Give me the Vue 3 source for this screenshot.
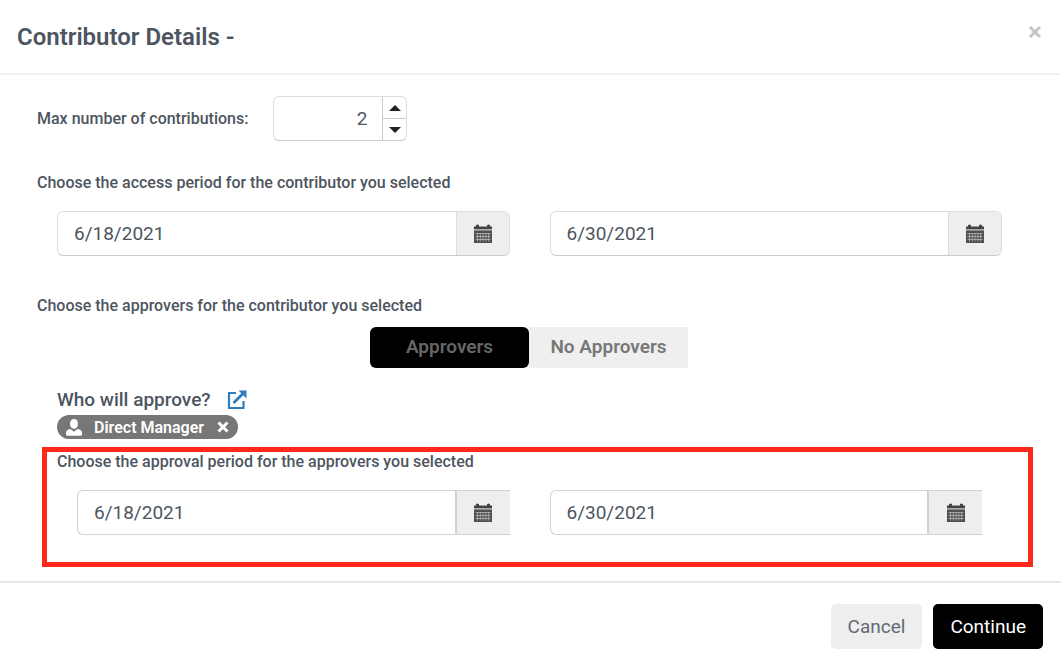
<script setup>
import { ref, h } from 'vue'

const contributions = ref(2)
const accessStart = ref('6/18/2021')
const accessEnd = ref('6/30/2021')
const approvalStart = ref('6/18/2021')
const approvalEnd = ref('6/30/2021')
const mode = ref('approvers')

const CalendarIcon = () =>
  h('svg', { width: 18, height: 20, viewBox: '0 0 18 20', 'aria-hidden': 'true' }, [
    h('path', { fill: '#444', d: 'M0 2.500h2V1.200Q3.500 0 5 1.200V2.500h8V1.200Q14.500 0 16 1.200V2.500h2V5H0z' }),
    h('path', { fill: '#aaa', d: 'M0 5h18v1.500H0z' }),
    h('path', { fill: '#505050', d: 'M0 6.500h18v12.500H0z' }),
    h('path', { stroke: '#b4b4b4', 'stroke-width': 0.8, d: 'M1.500 9.500h15M1.500 12.500h15M1.500 15.500h15M3.500 9v8.500M6.300 9v8.500M9.100 9v8.500M11.900 9v8.500M14.700 9v8.500' })
  ])
</script>

<template>
  <main class="dialog" role="dialog" aria-labelledby="title">
    <header class="head">
      <h1 id="title">Contributor Details -</h1>
      <button class="close" type="button" aria-label="Close">
        <svg width="14" height="14" viewBox="0 0 14 14"><path d="M2 2l10 10M12 2L2 12" stroke="#c6c6c6" stroke-width="3" /></svg>
      </button>
    </header>

    <form class="body" @submit.prevent>
      <div class="count-row">
        <label for="count">Max number of contributions:</label>
        <div class="spinner">
          <input id="count" v-model="contributions" type="text" inputmode="numeric" />
          <div class="steps">
            <button type="button" aria-label="Increase" @click="contributions++">
              <svg width="12" height="6" viewBox="0 0 12 6"><path d="M0 6L6 0l6 6z" fill="#222" /></svg>
            </button>
            <button type="button" aria-label="Decrease" @click="contributions--">
              <svg width="12" height="6" viewBox="0 0 12 6"><path d="M0 0l6 6 6-6z" fill="#222" /></svg>
            </button>
          </div>
        </div>
      </div>

      <p class="caption access-caption">Choose the access period for the contributor you selected</p>
      <div class="dates access">
        <div class="date">
          <input v-model="accessStart" type="text" aria-label="Access start date" />
          <button type="button" aria-label="Pick access start date"><CalendarIcon /></button>
        </div>
        <div class="date">
          <input v-model="accessEnd" type="text" aria-label="Access end date" />
          <button type="button" aria-label="Pick access end date"><CalendarIcon /></button>
        </div>
      </div>

      <p class="caption approver-caption">Choose the approvers for the contributor you selected</p>
      <div class="toggle">
        <button type="button" :class="{ active: mode === 'approvers' }" @click="mode = 'approvers'">Approvers</button>
        <button type="button" :class="{ active: mode === 'none' }" @click="mode = 'none'">No Approvers</button>
      </div>

      <div class="who">
        <h2>Who will approve?</h2>
        <a href="#" aria-label="Select approvers">
          <svg width="20" height="20" viewBox="0 0 20 20" fill="none" stroke="#2f7dbd">
            <path d="M9 3H2v15h14.500V11" stroke-width="2.200" />
            <path d="M6.500 13L16 3.500" stroke-width="2.800" />
            <path d="M11.500 .5H19.500V8.500z" fill="#2f7dbd" stroke="none" />
          </svg>
        </a>
      </div>
      <div class="chip">
        <svg width="16" height="17" viewBox="0 0 16 17" fill="#fff" aria-hidden="true">
          <path d="M8 0C5.500 0 4 1.800 4 4.500c0 2 .8 3.700 2 4.500L8 10l2-1c1.200-.8 2-2.500 2-4.500C12 1.800 10.500 0 8 0z" />
          <path d="M4.500 10L8 12.800 11.500 10C14.500 10.400 16 11.500 16 14V15.500Q16 16.800 14.500 16.800H1.500Q0 16.800 0 15.500V14C0 11.500 1.500 10.400 4.500 10z" />
        </svg>
        <span>Direct Manager</span>
        <button type="button" aria-label="Remove Direct Manager">
          <svg width="12" height="12" viewBox="0 0 12 12"><path d="M1.500 1.500l9 9M10.500 1.500l-9 9" stroke="#fff" stroke-width="3" /></svg>
        </button>
      </div>

      <section class="approval">
        <p class="caption">Choose the approval period for the approvers you selected</p>
        <div class="dates">
          <div class="date square">
            <input v-model="approvalStart" type="text" aria-label="Approval start date" />
            <button type="button" aria-label="Pick approval start date"><CalendarIcon /></button>
          </div>
          <div class="date square">
            <input v-model="approvalEnd" type="text" aria-label="Approval end date" />
            <button type="button" aria-label="Pick approval end date"><CalendarIcon /></button>
          </div>
        </div>
      </section>
    </form>

    <footer class="foot">
      <button type="button" class="cancel">Cancel</button>
      <button type="button" class="continue">Continue</button>
    </footer>
  </main>
</template>

<style>
body { background: #fff; }
</style>

<style scoped>
.dialog, .dialog * { box-sizing: border-box; }
.dialog { font-family: Roboto, sans-serif; color: #4d5560; background: #fff; }
h1, h2, p { margin: 0; }
button, input { font: inherit; color: inherit; margin: 0; padding: 0; border: 0; background: none; }
button { cursor: pointer; display: flex; align-items: center; justify-content: center; }

.head {
  display: flex;
  justify-content: space-between;
  align-items: flex-start;
  padding: 20px 19px 18px 17px;
  border-bottom: 2px solid #f1f1f1;
}
h1 { font-size: 24px; line-height: 35px; font-weight: 600; }
.close { width: 14px; height: 24px; }

.body { padding: 21px 28px 14px 37px; }
.count-row { display: flex; align-items: center; gap: 25px; }
.count-row label, .caption { font-size: 16px; line-height: 20px; font-weight: 500; }
.spinner {
  display: flex;
  width: 134px;
  height: 45px;
  border: 1px solid #dcdcdc;
  border-bottom-color: #ccc;
  border-radius: 6px;
}
.spinner input { flex: 1; min-width: 0; padding-right: 15px; text-align: right; font-size: 19px; }
.steps { display: flex; flex-direction: column; width: 24px; border-left: 1px solid #ccc; }
.steps button { flex: 1; }
.steps button + button { border-top: 1px solid #ccc; }

.access-caption { margin-top: 32px; }
.approver-caption { margin-top: 40px; }
.dates { display: grid; grid-template-columns: 1fr 1fr; gap: 40px; }
.access { margin: 18px 31px 0 20px; }
.date {
  display: flex;
  height: 45px;
  border: 1px solid #ddd;
  border-bottom-color: #ccc;
  border-radius: 6px;
  overflow: hidden;
}
.date input { flex: 1; min-width: 0; padding-left: 16px; font-size: 19px; }
.date button { width: 53px; background: #eee; border-left: 1px solid #ddd; }
.date.square { border-color: #d2d2d2; border-radius: 6px 0 0 6px; border-right: 0; }
.date.square button { width: 55px; border-left: 2px solid #d2d2d2; }

.toggle { display: flex; justify-content: center; margin: 11px 20px 0 8px; }
.toggle button {
  width: 159px;
  height: 41px;
  padding-bottom: 2px;
  background: #efefef;
  color: #777;
  font-size: 19px;
  font-weight: 600;
}
.toggle .active { background: #000; color: #666; border-radius: 6px; }

.who { display: flex; align-items: center; gap: 16px; margin: 20px 0 0 20px; }
h2 { font-size: 19px; line-height: 24px; font-weight: 500; }
.who a { display: flex; }
.chip {
  display: flex;
  align-items: center;
  width: fit-content;
  height: 24px;
  margin: 3px 0 0 20px;
  padding: 0 9px;
  border-radius: 12px;
  background: #777;
  color: #fff;
  font-size: 16px;
  font-weight: 600;
}
.chip span { margin: 0 13px 0 12px; }

.approval { margin: 8px 0 0 5px; padding: 0 46px 27px 10px; border: 5px solid #fd2a1c; }
.approval .dates { margin: 18px 0 0 20px; }

.foot {
  display: flex;
  justify-content: flex-end;
  gap: 11px;
  padding: 21px 18px 16px;
  border-top: 2px solid #e8e8e8;
}
.foot button { height: 45px; padding: 0 17px; border-radius: 5px; font-size: 19px; }
.cancel { background: #eee; color: #626975; }
.continue { background: #000; color: #fff; }
</style>
